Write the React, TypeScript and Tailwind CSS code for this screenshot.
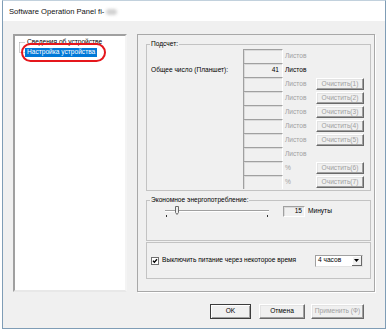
import React from "react";

type Row = { label?: string; value?: string; unit: string; btn?: string; active?: boolean };

const rows: Row[] = [
  { unit: "Листов" },
  { label: "Общее число (Планшет):", value: "41", unit: "Листов", active: true },
  { unit: "Листов", btn: "Очистить(1)" },
  { unit: "Листов", btn: "Очистить(2)" },
  { unit: "Листов", btn: "Очистить(3)" },
  { unit: "Листов", btn: "Очистить(4)" },
  { unit: "Листов", btn: "Очистить(5)" },
  { unit: "Листов" },
  { unit: "%", btn: "Очистить(6)" },
  { unit: "%", btn: "Очистить(7)" },
];

function ClassicButton({
  children,
  className,
  disabled,
  isDefault,
}: {
  children: React.ReactNode;
  className: string;
  disabled?: boolean;
  isDefault?: boolean;
}) {
  return (
    <div
      className={
        className +
        " flex items-center justify-center bg-[#f0f0f0] border " +
        (isDefault
          ? "border-[#3c3c3c] shadow-[inset_1px_1px_0_#fff,inset_-1px_-1px_0_#a0a0a0]"
          : "border-t-white border-l-white border-r-[#696969] border-b-[#696969] shadow-[inset_-1px_-1px_0_#a0a0a0,inset_1px_1px_0_#e3e3e3]") +
        (disabled ? " text-[#a0a0a0]" : " text-black")
      }
    >
      {children}
    </div>
  );
}

export default function App() {
  return (
    <div className="w-[386px] h-[330px] bg-white font-['Liberation_Sans',Arial,sans-serif] text-black overflow-hidden">
      <div className="ml-[2px] w-[384px] h-[329px] border border-[#7f9db6] border-t-[#c2d1dd] flex flex-col">
        {/* title bar */}
        <div className="h-[20px] shrink-0 bg-white flex items-center pl-[6px] pt-[1px] text-[7.6px] leading-none text-[#111]">
          <span>Software Operation Panel fi-</span>
          <span className="ml-[2px] w-[11px] h-[6px] bg-[#d2d2d2] blur-[1.5px] rounded-sm" />
        </div>

        {/* body */}
        <div className="flex-1 bg-[#f0f0f0] flex flex-col text-[6.6px] leading-none">
          <div className="mt-[13px] ml-[10px] flex gap-[10px]">
            {/* tree */}
            <div className="relative w-[114px] h-[258px] bg-white border-2 border-t-[#a0a0a0] border-l-[#a0a0a0] border-r-[#f4f4f4] border-b-[#e8e8e8]">
              <div className="pt-[1px] ml-[4px] flex">
                <svg width="6" height="20" viewBox="0 0 6 20" className="shrink-0">
                  <path d="M0.5 5.5H6M0.5 5.5V15.5M0.5 15.5H6" stroke="#a0a0a0" strokeWidth="1" strokeDasharray="1 1" fill="none" />
                </svg>
                <div className="flex flex-col">
                  <div className="h-[10px] flex items-center">
                    <span className="px-[2px]">Сведения об устройстве</span>
                  </div>
                  <div className="h-[10px] flex items-center">
                    <span className="px-[2px] h-[9px] flex items-center bg-[#0078d7] text-white">Настройка устройства</span>
                  </div>
                </div>
              </div>
              <div className="absolute left-[6px] top-[7px] w-[85px] h-[19px] border-2 border-[#e5171c] rounded-full" />
            </div>

            {/* right panel */}
            <div className="w-[238px] h-[258px] border border-[#a8a8a8] shadow-[1px_1px_0_#fff] flex flex-col pl-[8px]">
              {/* Подсчет */}
              <fieldset className="mt-[5px] w-[225px] border border-[#c3c3c3] pt-[1px] pb-[1px]">
                <legend className="ml-[3px] px-[1px] leading-[8px]">Подсчет:</legend>
                <div className="flex flex-col pl-[4px]">
                  {rows.map((r, i) => (
                    <div key={i} className="h-[14px] flex items-center">
                      <div className="w-[92px]">{r.label ?? ""}</div>
                      <div className="w-[40px] h-[14px] bg-[#f0f0f0] border-t border-l border-[#a0a0a0] border-r border-r-white shadow-[inset_1px_1px_0_#dadada] flex items-center justify-end pr-[3px]">
                        {r.value ?? ""}
                      </div>
                      <div className={"w-[33px] pl-[2px] " + (r.active ? "text-black" : "text-[#a0a0a0]")}>{r.unit}</div>
                      {r.btn ? (
                        <ClassicButton className="w-[48px] h-[12px]" disabled>
                          {r.btn}
                        </ClassicButton>
                      ) : null}
                    </div>
                  ))}
                </div>
              </fieldset>

              {/* Экономное энергопотребление */}
              <fieldset className="mt-[5px] w-[225px] border border-[#c3c3c3]">
                <legend className="ml-[3px] px-[1px] leading-[8px]">Экономное энергопотребление:</legend>
                <div className="h-[36px] pt-[1px]">
                  <div className="h-[12px] flex items-center">
                    <svg width="110" height="12" viewBox="0 0 110 12" className="ml-[16px] shrink-0">
                      <line x1="2" y1="5.5" x2="106" y2="5.5" stroke="#a0a0a0" strokeWidth="1" />
                      <line x1="2" y1="6.5" x2="106" y2="6.5" stroke="#ffffff" strokeWidth="1" />
                      <polygon points="12.5,1.5 15.5,1.5 15.5,7.5 14,9.5 12.5,7.5" fill="#f0f0f0" stroke="#696969" strokeWidth="1" />
                      <rect x="3" y="10" width="1" height="2" fill="#303030" />
                      <rect x="104" y="10" width="1" height="2" fill="#303030" />
                    </svg>
                    <div className="ml-[10px] w-[22px] h-[11px] bg-[#f0f0f0] border-t border-l border-[#a0a0a0] border-r border-b border-r-white border-b-white shadow-[inset_1px_1px_0_#dadada] flex items-center justify-end pr-[2px]">
                      15
                    </div>
                    <span className="ml-[3px]">Минуты</span>
                  </div>
                </div>
              </fieldset>

              {/* Checkbox row */}
              <div className="mt-[1px] w-[225px] h-[37px] border border-[#c3c3c3] flex items-center pl-[4px]">
                <svg width="8" height="8" viewBox="0 0 8 8" className="shrink-0">
                  <rect x="0.5" y="0.5" width="7" height="7" fill="#fff" stroke="#707070" />
                  <path d="M2 3.8L3.4 5.3L6 2.3" stroke="#000" strokeWidth="1.3" fill="none" />
                </svg>
                <span className="ml-[3px]">Выключить питание через некоторое время</span>
                <div className="ml-auto mr-[7px] w-[48px] h-[12px] bg-white border border-t-[#a0a0a0] border-l-[#a0a0a0] border-r-[#e3e3e3] border-b-[#e3e3e3] flex items-center">
                  <span className="pl-[2px] flex-1">4 часов</span>
                  <div className="w-[10px] h-[10px] bg-[#f0f0f0] border-r border-b border-[#696969] shadow-[inset_1px_1px_0_#fff] flex items-center justify-center">
                    <svg width="5" height="3" viewBox="0 0 5 3">
                      <polygon points="0,0 5,0 2.5,3" fill="#000" />
                    </svg>
                  </div>
                </div>
              </div>
            </div>
          </div>

          {/* bottom buttons */}
          <div className="mt-[12px] flex pl-[207px]">
            <ClassicButton className="w-[41px] h-[15px]" isDefault>
              OK
            </ClassicButton>
            <ClassicButton className="ml-[8px] w-[46px] h-[15px]">Отмена</ClassicButton>
            <ClassicButton className="ml-[6px] w-[53px] h-[15px]" disabled>
              Применить (Ф)
            </ClassicButton>
          </div>
        </div>
      </div>
    </div>
  );
}
